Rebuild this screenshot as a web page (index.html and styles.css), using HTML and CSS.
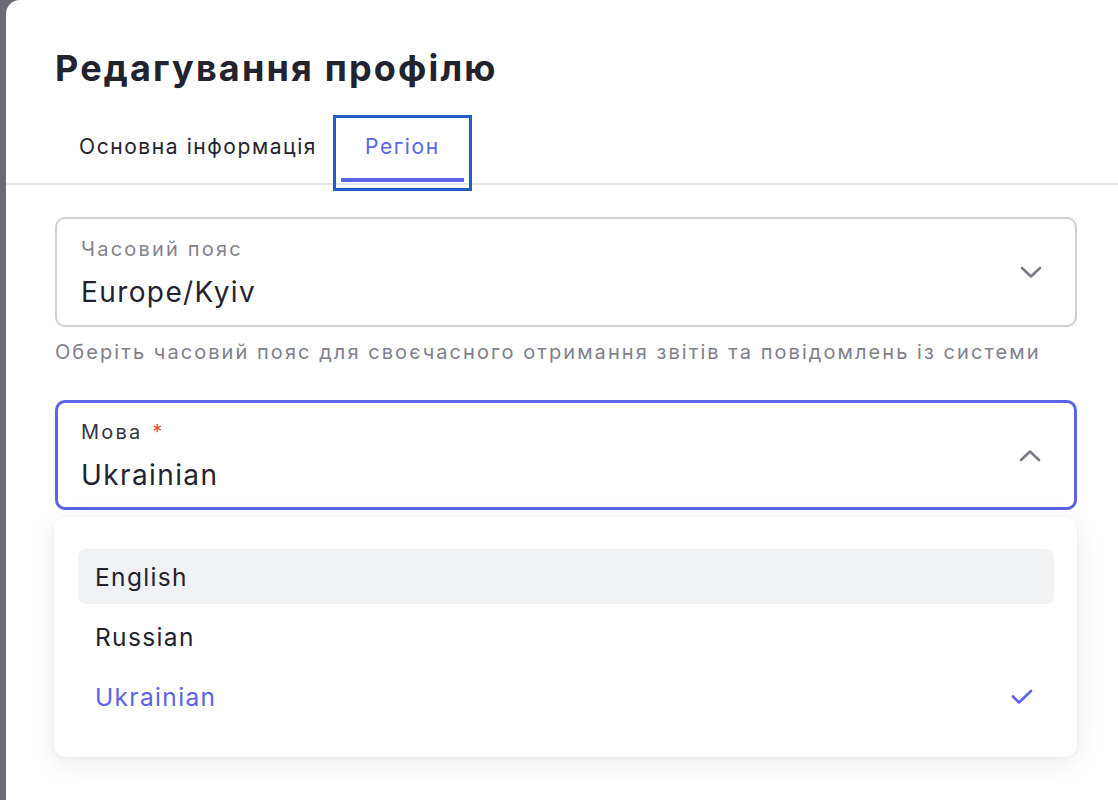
FILE: index.html
```html
<!DOCTYPE html>
<html lang="uk">
<head>
<meta charset="utf-8">
<title>Редагування профілю</title>
<link rel="stylesheet" href="styles.css">
</head>
<body>
<div class="backdrop">
  <div class="modal">
    <h1 class="title">Редагування профілю</h1>
    <div class="tabs">
      <div class="tab">Основна інформація</div>
      <div class="tab tab-active">Регіон</div>
    </div>
    <div class="content">
      <div class="field">
        <div class="select">
          <div class="select-text">
            <div class="label">Часовий пояс</div>
            <div class="value">Europe/Kyiv</div>
          </div>
          <svg class="chev" width="22" height="13" viewBox="0 0 22 13"><path d="M2 2 L11 10.5 L20 2" fill="none" stroke="#7c7c87" stroke-width="2.6" stroke-linecap="round" stroke-linejoin="round"/></svg>
        </div>
        <div class="helper">Оберіть часовий пояс для своєчасного отримання звітів та повідомлень із системи</div>
      </div>
      <div class="field field-open">
        <div class="select select-focus">
          <div class="select-text">
            <div class="label label-dark">Мова <span class="req">*</span></div>
            <div class="value">Ukrainian</div>
          </div>
          <svg class="chev" width="22" height="13" viewBox="0 0 22 13"><path d="M2 11 L11 2.5 L20 11" fill="none" stroke="#7c7c87" stroke-width="2.6" stroke-linecap="round" stroke-linejoin="round"/></svg>
        </div>
        <div class="menu">
          <div class="option option-hover">English</div>
          <div class="option">Russian</div>
          <div class="option option-selected">Ukrainian
            <svg class="check" width="24" height="18" viewBox="0 0 24 18"><path d="M3 8.5 L9 14.5 L21 3" fill="none" stroke="#5b63e6" stroke-width="2.6" stroke-linecap="round" stroke-linejoin="round"/></svg>
          </div>
        </div>
      </div>
    </div>
  </div>
</div>
</body>
</html>
```

FILE: styles.css
```css
* { box-sizing: border-box; }
html, body { margin: 0; padding: 0; }
body {
  font-family: Inter, "Noto Sans", sans-serif;
  color: #23232f;
}
.backdrop {
  background: #6b6a75;
  width: 1118px;
  height: 800px;
  padding-left: 6px;
  overflow: hidden;
}
.modal {
  background: #ffffff;
  height: 800px;
  border-top-left-radius: 14px;
  padding-top: 45px;
}
.title {
  margin: 0 0 0 49px;
  font-size: 36px;
  line-height: 46px;
  font-weight: 700;
  letter-spacing: 0.06em;
  color: #23232f;
}
.tabs {
  display: flex;
  margin-top: 32px;
  padding-left: 49px;
  border-bottom: 2px solid #e4e4e9;
}
.tab {
  padding: 11px 24px 0;
  height: 60px;
  font-size: 21px;
  line-height: 26px;
  letter-spacing: 0.075em;
  color: #23232f;
  position: relative;
}
.tab-active {
  color: #5b63e6;
  outline: 3px solid #1e60c4;
  outline-offset: 5px;
}
.tab-active::after {
  content: "";
  position: absolute;
  left: 0;
  right: 0;
  bottom: 1px;
  height: 4px;
  background: #5b63e6;
}
.content {
  padding: 32px 41px 0 49px;
  display: flex;
  flex-direction: column;
  gap: 35px;
}
.field { position: relative; }
.select {
  height: 110px;
  border: 2px solid #d0d0d6;
  border-radius: 10px;
  display: flex;
  align-items: center;
  justify-content: space-between;
  padding: 0 33px 0 24px;
}
.select-focus {
  border: 3px solid #5b63e6;
  padding-left: 23px;
}
.select-text {
  display: flex;
  flex-direction: column;
  gap: 16px;
  margin-top: 1px;
}
.label {
  font-size: 20px;
  line-height: 22px;
  letter-spacing: 0.11em;
  color: #83838e;
}
.label-dark { color: #33333f; }
.req { color: #e5502f; margin-left: 2px; }
.value {
  font-size: 28px;
  line-height: 32px;
  letter-spacing: 0.05em;
  color: #23232f;
}
.chev { display: block; }
.helper {
  margin-top: 12px;
  font-size: 20px;
  line-height: 26px;
  letter-spacing: 0.103em;
  color: #80808b;
}
.menu {
  position: absolute;
  top: 117px;
  left: -1px;
  right: 0;
  background: #ffffff;
  border-radius: 12px;
  box-shadow: 0 6px 28px rgba(20, 20, 40, 0.08), 0 1px 4px rgba(20, 20, 40, 0.05);
  padding: 32px 23px 33px 24px;
  display: flex;
  flex-direction: column;
  gap: 5px;
}
.option {
  height: 55px;
  border-radius: 8px;
  padding: 0 20px 0 17px;
  display: flex;
  align-items: center;
  justify-content: space-between;
  font-size: 24.5px;
  letter-spacing: 0.055em;
  color: #23232f;
}
.option-hover { background: #f1f2f4; }
.option-selected { color: #5b63e6; }
.check { display: block; }
```
